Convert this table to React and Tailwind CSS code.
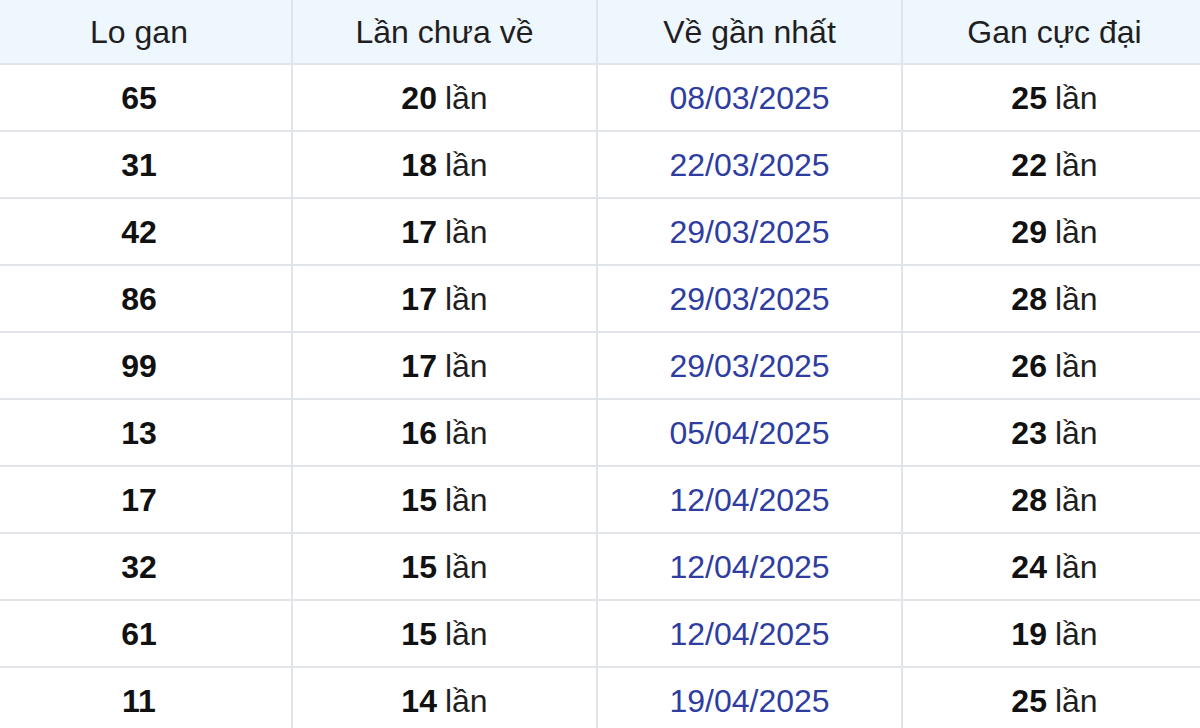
import React from "react";

const rows = [
  ["65", "20", "08/03/2025", "25"],
  ["31", "18", "22/03/2025", "22"],
  ["42", "17", "29/03/2025", "29"],
  ["86", "17", "29/03/2025", "28"],
  ["99", "17", "29/03/2025", "26"],
  ["13", "16", "05/04/2025", "23"],
  ["17", "15", "12/04/2025", "28"],
  ["32", "15", "12/04/2025", "24"],
  ["61", "15", "12/04/2025", "19"],
  ["11", "14", "19/04/2025", "25"],
];

const headers = ["Lo gan", "Lần chưa về", "Về gần nhất", "Gan cực đại"];

export default function App() {
  return (
    <div className="w-[1200px] h-[728px] overflow-hidden bg-white" style={{ fontFamily: '"Liberation Sans", Arial, sans-serif' }}>
      <div className="ml-[-13px] w-[1219px] grid grid-cols-[304px_303px_303px_303px] gap-[2px] bg-[#e1e4e9] text-[32px] text-[#1f1f1f]">
        {headers.map((h) => (
          <div key={h} className="h-[63px] bg-[#eef6fe] flex items-center justify-center">
            {h}
          </div>
        ))}
        {rows.map((r, i) => (
          <React.Fragment key={i}>
            <div className="h-[65px] bg-white flex items-center justify-center font-bold text-[#111]">{r[0]}</div>
            <div className="h-[65px] bg-white flex items-center justify-center">
              <span className="font-bold text-[#111]">{r[1]}</span>
              <span className="ml-[8px]">lần</span>
            </div>
            <div className="h-[65px] bg-white flex items-center justify-center text-[#2e3d9f]">{r[2]}</div>
            <div className="h-[65px] bg-white flex items-center justify-center">
              <span className="font-bold text-[#111]">{r[3]}</span>
              <span className="ml-[8px]">lần</span>
            </div>
          </React.Fragment>
        ))}
      </div>
    </div>
  );
}
